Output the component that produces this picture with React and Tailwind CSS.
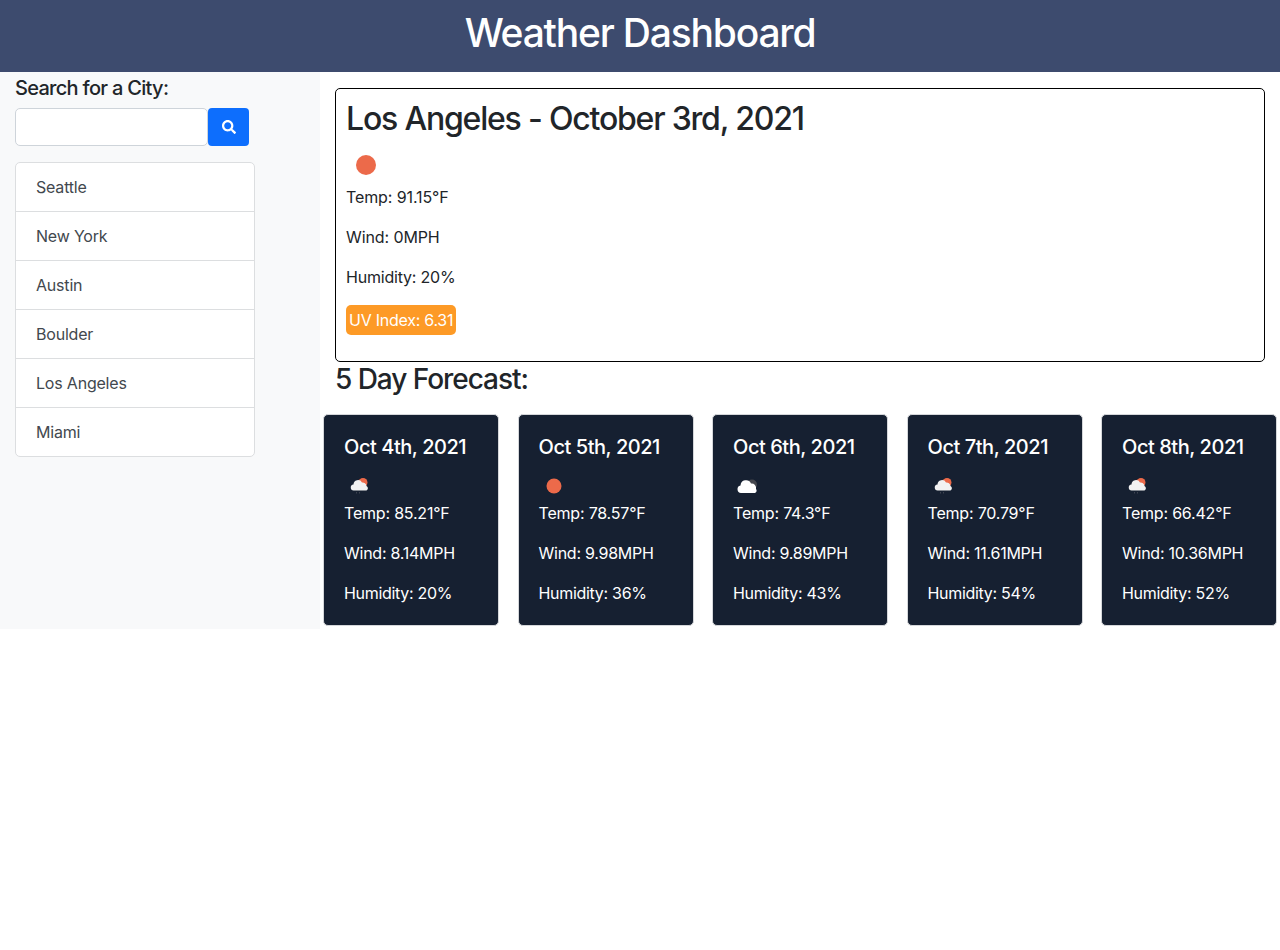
import { FaSearch } from 'react-icons/fa';

const cities = ['Seattle', 'New York', 'Austin', 'Boulder', 'Los Angeles', 'Miami'];

const forecast = [
  { date: 'Oct 4th, 2021', icon: 'rain', temp: '85.21', wind: '8.14', humidity: '20' },
  { date: 'Oct 5th, 2021', icon: 'sun', temp: '78.57', wind: '9.98', humidity: '36' },
  { date: 'Oct 6th, 2021', icon: 'cloud', temp: '74.3', wind: '9.89', humidity: '43' },
  { date: 'Oct 7th, 2021', icon: 'rain', temp: '70.79', wind: '11.61', humidity: '54' },
  { date: 'Oct 8th, 2021', icon: 'rain', temp: '66.42', wind: '10.36', humidity: '52' },
];

const WeatherIcon = ({ type, className }) => {
  if (type === 'sun') {
    return (
      <svg viewBox="0 0 30 30" className={className}>
        <circle cx="15" cy="15" r="7.5" fill="#ec6a4a" />
      </svg>
    );
  }
  if (type === 'cloud') {
    return (
      <svg viewBox="0 0 30 30" className={className}>
        <circle cx="19" cy="13.5" r="5" fill="#44464d" />
        <path d="M8 22a3.8 3.8 0 0 1-.5-7.5 5.5 5.5 0 0 1 10.5-2 4.5 4.5 0 0 1 5 5.500 2.500 2.500 0 0 1-1 4z" fill="#fff" />
      </svg>
    );
  }
  return (
    <svg viewBox="0 0 30 30" className={className}>
      <circle cx="19" cy="11.500" r="4.500" fill="#ec6a4a" />
      <path d="M10 19.500a3 3 0 0 1-.5-6 4.500 4.500 0 0 1 8.500-2 4 4 0 0 1 4.500 3.500 2.500 2.500 0 0 1 0 4.500z" fill="#f2f2f2" />
      <path d="M12.500 21v1.500M15.500 21v1.500" stroke="#3d4350" strokeWidth="1" />
    </svg>
  );
};

const ForecastCard = ({ day }) => (
  <div className="w-[176px] h-[212px] bg-[#162031] border border-[#d5d7da] rounded-[5px] px-5 pt-[20px] text-white">
    <h5 className="text-[20px] leading-[24px] font-medium tracking-[-0.45px]">{day.date}</h5>
    <WeatherIcon type={day.icon} className="w-[30px] h-[30px] mt-[12px]" />
    <p className="h-[40px] leading-[24px] tracking-[-0.2px]">Temp: {day.temp}°F</p>
    <p className="h-[40px] leading-[24px] tracking-[-0.25px]">Wind: {day.wind}MPH</p>
    <p className="leading-[24px] tracking-[-0.3px]">Humidity: {day.humidity}%</p>
  </div>
);

export default function App() {
  return (
    <div className="min-h-[950px] bg-white text-[#212529] font-['Inter',sans-serif]">
      <header className="h-[72px] bg-[#3d4b6e] text-center text-white">
        <h1 className="text-[39px] leading-[66px] font-medium tracking-[-1.2px]">Weather Dashboard</h1>
      </header>

      <div className="flex">
        <aside className="w-[320px] h-[557px] bg-[#f8f9fa] pl-[15px] shrink-0">
          <h5 className="text-[20px] leading-[24px] mt-[4px] font-medium tracking-[-0.7px]">Search for a City:</h5>
          <div className="flex mt-[8px]">
            <input type="text" className="w-[193px] h-[38px] bg-white border border-[#ced4da] rounded-[5px]" />
            <button className="w-[41px] h-[38px] bg-[#0d6efd] rounded-[4px] text-white flex items-center justify-center">
              <FaSearch className="w-[14px] h-[14px]" />
            </button>
          </div>
          <ul className="w-[240px] mt-[16px] bg-white border border-[#dcdee0] rounded-[5px]">
            {cities.map((city, i) => (
              <li
                key={city}
                className={i < cities.length - 1
                  ? 'h-[49px] pl-[20px] leading-[48px] text-[#42484e] tracking-[-0.2px] border-b border-[#dcdee0]'
                  : 'h-[48px] pl-[20px] leading-[48px] text-[#42484e] tracking-[-0.2px]'}
              >
                {city}
              </li>
            ))}
          </ul>
        </aside>

        <main className="flex-1 px-[3px]">
          <section className="mx-[12px] mt-[16px] h-[274px] border border-black rounded-[5px] pl-[10px] pt-[8px]">
            <h2 className="text-[32px] leading-[44px] font-medium tracking-[-1.2px]">Los Angeles - October 3rd, 2021</h2>
            <WeatherIcon type="sun" className="w-[40px] h-[40px] mt-[4px]" />
            <p className="h-[40px] leading-[24px] tracking-[-0.1px]">Temp: 91.15°F</p>
            <p className="h-[40px] leading-[24px] tracking-[-0.1px]">Wind: 0MPH</p>
            <p className="h-[40px] leading-[24px] tracking-[-0.2px]">Humidity: 20%</p>
            <span className="inline-block h-[30px] px-[3px] bg-[#fd9a26] rounded-[5px] text-white leading-[30px] tracking-[-0.25px]">UV Index: 6.31</span>
          </section>
          <h3 className="mx-[12px] text-[28px] leading-[34px] font-medium tracking-[-1.05px]">5 Day Forecast:</h3>
          <div className="flex justify-between mt-[18px]">
            {forecast.map((day) => (
              <ForecastCard key={day.date} day={day} />
            ))}
          </div>
        </main>
      </div>
    </div>
  );
}
